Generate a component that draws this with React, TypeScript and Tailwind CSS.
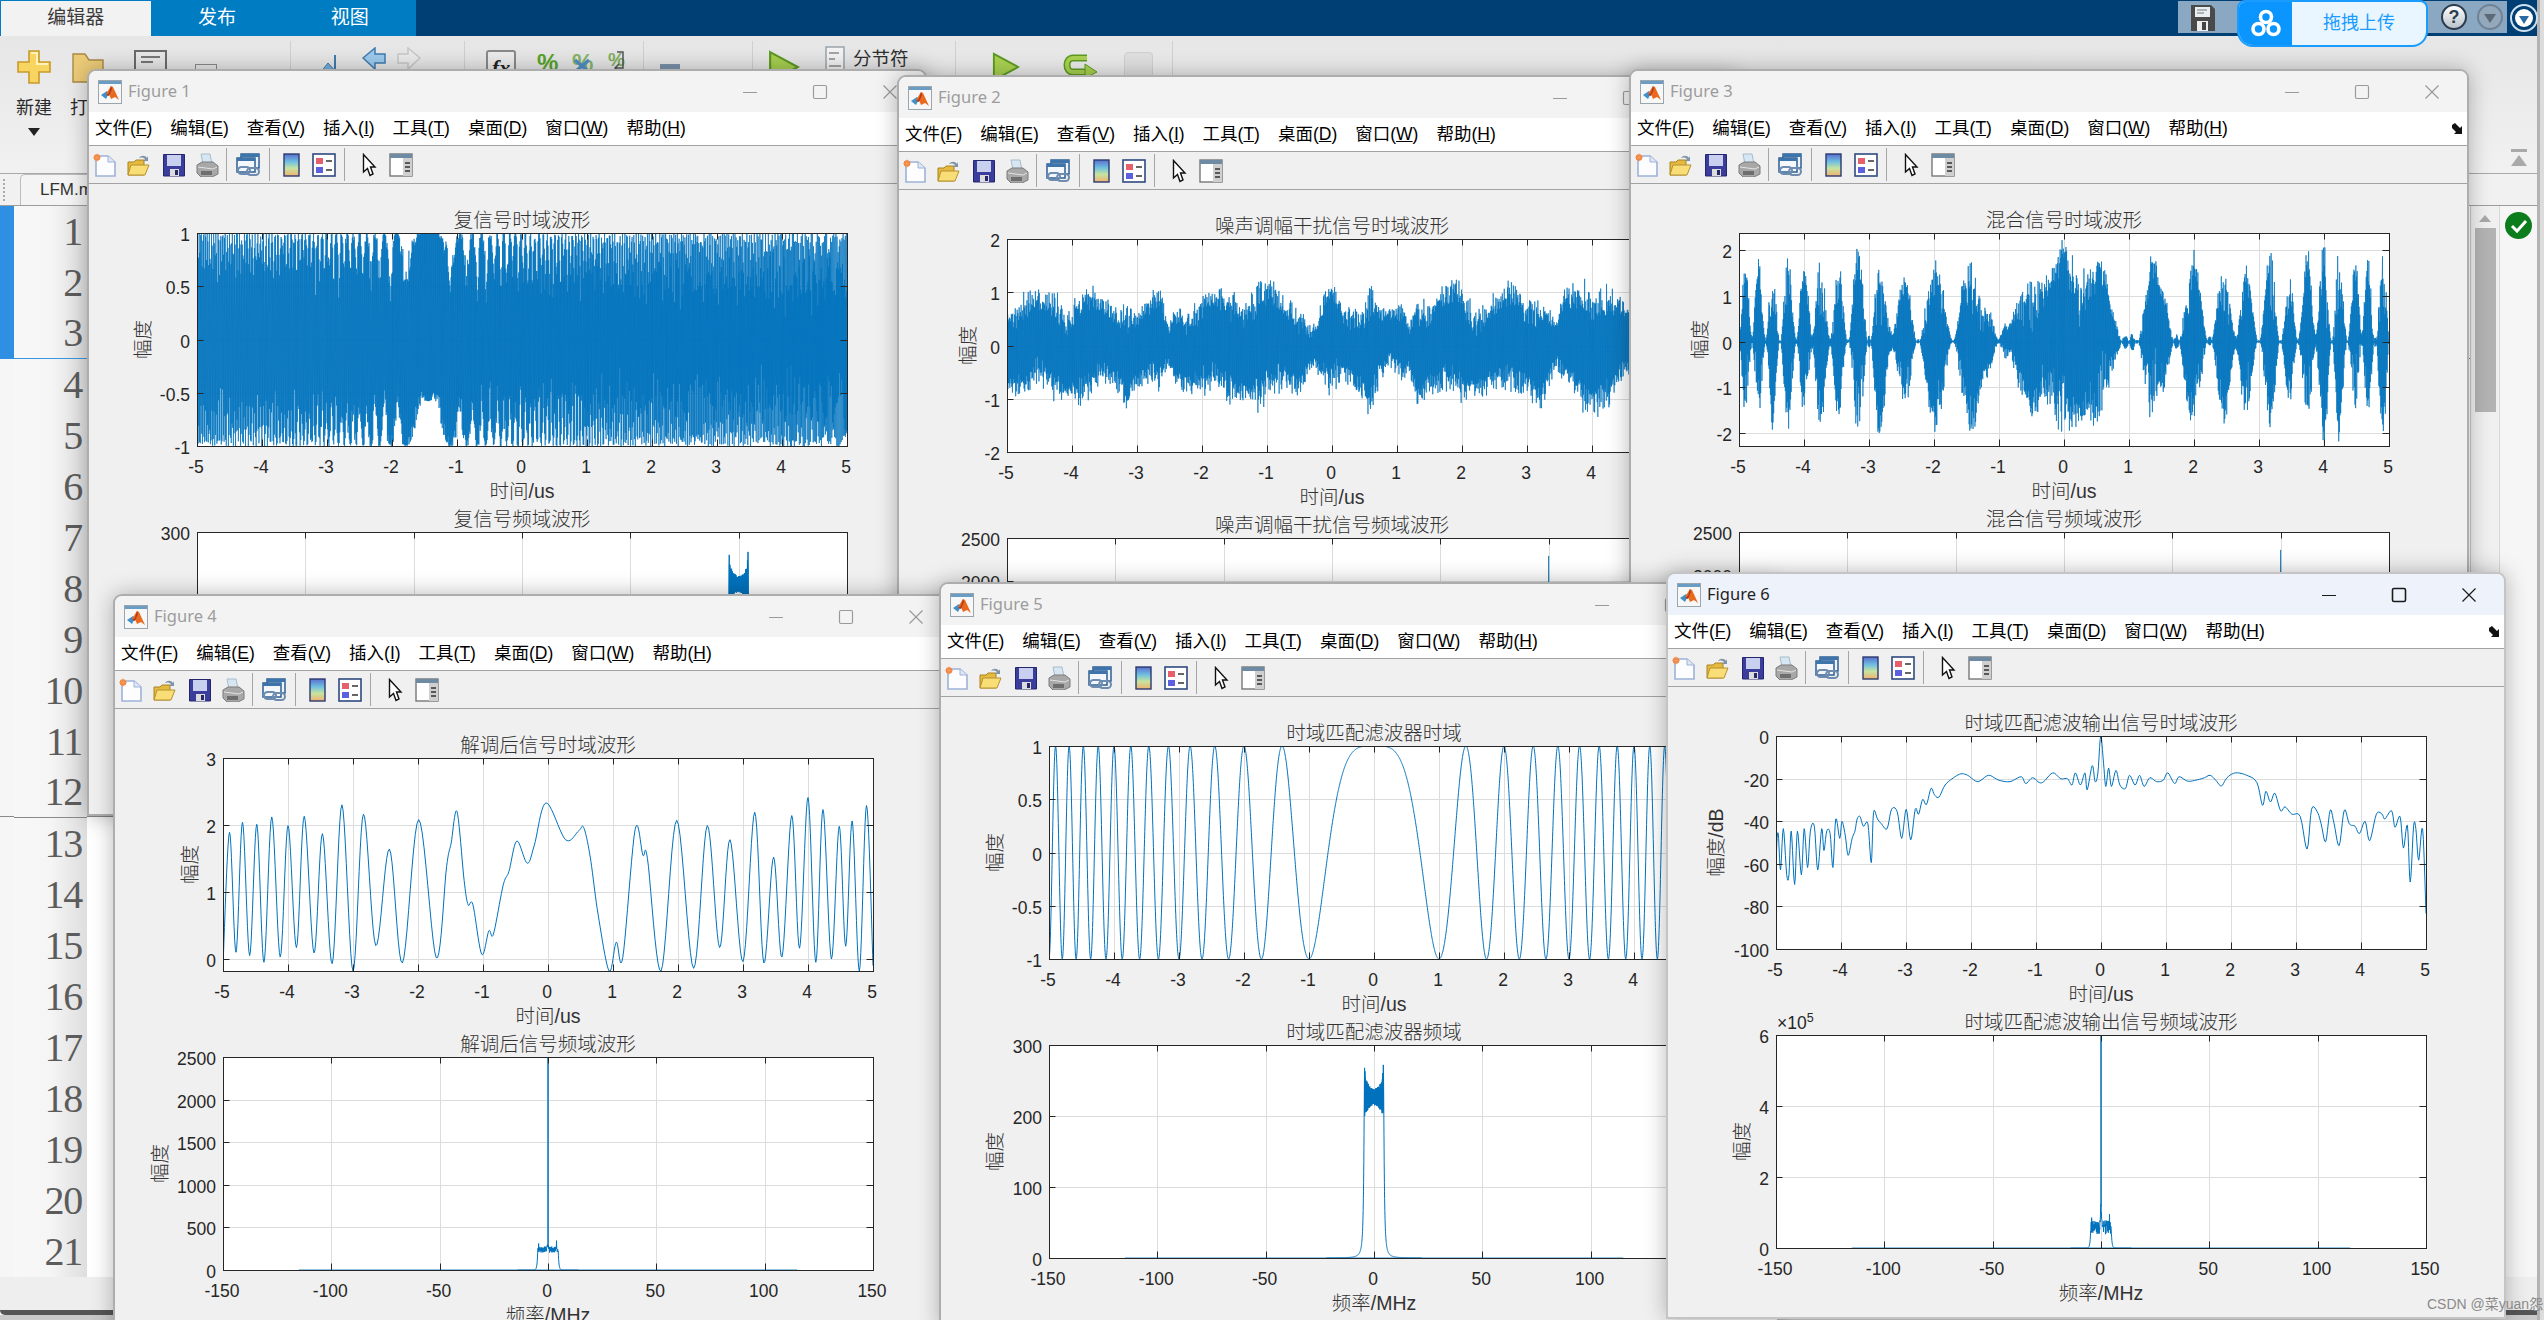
import React from "react";

type P = [number, number];
const BLUE = "#0072bd";

function rng(seed: number) {
  let a = seed;
  return () => {
    a |= 0; a = (a + 0x6d2b79f5) | 0;
    let t = Math.imul(a ^ (a >>> 15), 1 | a);
    t = (t + Math.imul(t ^ (t >>> 7), 61 | t)) ^ t;
    return ((t ^ (t >>> 14)) >>> 0) / 4294967296;
  };
}

function spline(pts: P[], n = 10): P[] {
  const out: P[] = [];
  for (let i = 0; i < pts.length - 1; i++) {
    const p0 = pts[Math.max(i - 1, 0)], p1 = pts[i], p2 = pts[i + 1], p3 = pts[Math.min(i + 2, pts.length - 1)];
    for (let j = 0; j < n; j++) {
      const s = j / n, s2 = s * s, s3 = s2 * s;
      const f = (a: number, b: number, c: number, d: number) =>
        0.5 * (2 * b + (c - a) * s + (2 * a - 5 * b + 4 * c - d) * s2 + (3 * b - a - 3 * c + d) * s3);
      out.push([f(p0[0], p1[0], p2[0], p3[0]), f(p0[1], p1[1], p2[1], p3[1])]);
    }
  }
  out.push(pts[pts.length - 1]);
  return out;
}

function lookup(pts: P[], x: number) {
  let lo = 0, hi = pts.length - 1;
  while (hi - lo > 1) {
    const m = (lo + hi) >> 1;
    if (pts[m][0] <= x) lo = m; else hi = m;
  }
  const d = pts[hi][0] - pts[lo][0] || 1;
  return pts[lo][1] + ((pts[hi][1] - pts[lo][1]) * (x - pts[lo][0])) / d;
}

const demodKnots: P[] = [[-5,-.1],[-4.9,1.89],[-4.8,.1],[-4.7,2.04],[-4.59,.05],[-4.48,2.01],[-4.37,-.05],[-4.25,2.12],[-4.12,.03],[-4,1.99],[-3.87,.17],[-3.75,2.13],[-3.6,.09],[-3.47,1.87],[-3.32,-.07],[-3.17,2.3],[-3,-.18],[-2.84,2.16],[-2.65,.2],[-2.44,1.64],[-2.24,-.06],[-1.99,2.08],[-1.72,.02],[-1.56,1.38],[-1.49,1.73],[-1.4,2.2],[-1.29,1.17],[-1.23,.81],[-1.155,.81],[-1.02,.07],[-.91,.42],[-.84,.37],[-.69,1.1],[-.6,1.31],[-.48,1.76],[-.32,1.43],[-.21,1.7],[-.03,2.33],[.27,1.78],[.47,1.91],[.55,1.96],[.65,1.52],[.77,.67],[.94,-.18],[1.05,.25],[1.15,.02],[1.34,1.93],[1.46,1.55],[1.53,1.5],[1.74,-.18],[1.98,2.07],[2.24,-.14],[2.45,1.99],[2.64,.17],[2.8,1.78],[3,-.04],[3.18,2.19],[3.32,-.06],[3.47,1.52],[3.6,.03],[3.75,2.14],[3.87,.16],[4,2.41],[4.12,-.05],[4.23,2.23],[4.36,0],[4.48,1.98],[4.58,.19],[4.68,2.06],[4.79,-.18],[4.9,2.29],[5,-.1]];
const demod = spline(demodKnots, 10);

const matched: number[][] = [[205,745],[206,600],[209,565],[213,640],[218,555],[224,650],[228,650],[232,560],[238,670],[243,560],[250,650],[255,555],[261,635],[266,560],[273,550],[279,640],[286,555],[290,600],[295,560],[301,565],[306,635],[311,535],[318,575],[322,540],[328,570],[333,610],[340,575],[345,560],[349,535],[354,530],[360,550],[368,545],[374,625],[378,522],[385,535],[392,545],[402,555],[410,515],[420,520],[428,575],[436,515],[444,578],[452,515],[458,525],[465,495],[472,505],[480,472],[486,485],[494,490],[505,465],[520,450],[533,442],[545,445],[563,458],[582,445],[600,455],[620,458],[640,448],[648,462],[660,450],[672,460],[680,458],[696,440],[710,452],[722,452],[730,465],[736,440],[745,465],[753,440],[757,475],[766,425],[771,458],[776,440],[781,364],[786,420],[790,468],[795,430],[800,468],[808,435],[815,465],[825,472],[832,445],[842,465],[850,445],[858,468],[868,450],[880,458],[892,455],[900,440],[912,462],[920,448],[935,457],[950,455],[965,450],[975,445],[985,455],[995,467],[1005,450],[1020,440],[1040,445],[1058,460],[1068,507],[1074,478],[1082,500],[1090,482],[1100,518],[1108,510],[1120,525],[1135,530],[1147,597],[1155,515],[1165,520],[1172,545],[1180,582],[1188,517],[1195,545],[1204,590],[1213,517],[1222,545],[1232,550],[1240,565],[1250,540],[1258,580],[1270,525],[1280,525],[1285,535],[1297,518],[1303,552],[1312,530],[1318,595],[1325,548],[1330,665],[1336,550],[1340,555],[1345,620],[1352,555],[1358,730]];
const matchedPts = spline(matched.map(([x, y]) => [((x - 205) / 1153) * 10 - 5, (-(y - 364) / 439) * 100] as P), 5);

const noiseEnvKnots: number[][] = [[246,330],[270,295],[300,300],[350,295],[380,310],[405,262],[435,295],[470,340],[495,265],[520,330],[565,285],[585,400],[600,325],[625,315],[650,330],[660,295],[710,280],[740,290],[770,258],[800,265],[830,310],[860,315],[880,395],[890,395],[920,258],[950,340],[980,330],[1005,240],[1030,350],[1060,350],[1075,330],[1085,390],[1105,280],[1130,310],[1183,258],[1220,310],[1255,310],[1295,265],[1330,310],[1360,260],[1395,395],[1410,300],[1440,265],[1465,245],[1500,255],[1545,340],[1600,300]];
const noiseEnv = noiseEnvKnots.map(([x, y]) => [(x - 246) / 136 - 5, (467 - y) / 160] as P);

function sampled(fn: (t: number, i: number) => number): P[] {
  const out: P[] = [];
  for (let i = 0; i <= 3000; i++) {
    const t = -5 + i / 300;
    out.push([t, fn(t, i)]);
  }
  return out;
}

const r1 = rng(23), r2 = rng(11), r3 = rng(31), r4 = rng(47), r5 = rng(59);
const sigTime = sampled((t) => {
  const near = Math.exp(-(((t + 1.44) / 0.16) ** 2));
  const jitter = (r1() - 0.5) * 0.42 * (1 - near);
  return Math.cos(2 * Math.PI * 104.32 * t + 3 * Math.PI * t * t + 0.6 + jitter);
});
const jamTime = sampled((t) => lookup(noiseEnv, t) * (0.62 + 0.38 * r2()) * Math.cos(2 * Math.PI * 100.37 * t + (r3() - 0.5) * 0.7));
const mixTime = sampled((t) => Math.abs(lookup(demod, t)) * (0.72 + 0.28 * r4()) * Math.cos(2 * Math.PI * 100.43 * t + 0.4 + (r5() - 0.5) * 1.1));
const filterTime = sampled((t) => Math.cos(Math.PI * t * t));

function chirpBand(center: number, seed: number): P[] {
  const r = rng(seed);
  const out: P[] = [];
  let i = 0;
  for (let f = -22; f <= 22; f += 0.05, i++) {
    const d = Math.abs(f);
    let v: number;
    if (d < 4.3) {
      const u = d < 3.4 ? 238 + 12 * (d / 3.4) ** 2 : 250 + 22 * Math.min(1, (d - 3.4) / 0.8) ** 3;
      const l = 215 - 15 * Math.min(1, d / 4.2) ** 2;
      v = i % 2 ? l + (u - l) * (0.75 + 0.25 * r()) : l + (u - l) * 0.2 * r();
    } else {
      v = 272 / (1 + ((d - 4.3) / 0.4) ** 2);
    }
    out.push([center + f, v]);
  }
  return out;
}

function noiseBand(level: number, spread: number, top: number, seed: number, bump: number, edge: number): P[] {
  const r = rng(seed);
  const out: P[] = [];
  const step = 0.11;
  for (let f = -14; f <= 14; f += step) {
    const d = Math.abs(f);
    let v: number;
    if (d < 4.7) {
      v = level + spread * (r() * 2 - 1);
      if (d < 0.6) v += bump * (1 - d / 0.6);
    } else {
      v = level * Math.exp(-(d - 4.7) / 0.32);
    }
    if (Math.abs(f - 3.9) < 0.06) v = edge;
    if (Math.abs(f + 4.3) < 0.06) v = edge * 0.9;
    out.push([f, v]);
    if (f < 0 && f + step >= 0) {
      out.push([0, top]);
    }
  }
  return out;
}

type Trace = { d: P[]; w?: number; o?: number };
type Ax = {
  title: string;
  x: [number, number];
  xt: number[];
  y: [number, number];
  yt: number[];
  xl: string;
  yl: string;
  ylo: number;
  traces: Trace[];
  exp?: boolean;
};

const TIME = [-5, -4, -3, -2, -1, 0, 1, 2, 3, 4, 5];
const FREQ = [-150, -100, -50, 0, 50, 100, 150];
const base: Trace = { d: [[-115, 0], [115, 0]], w: 1.6, o: 0.55 };

const FONT = "font-['Liberation_Sans','Noto_Sans_CJK_SC',sans-serif]";

function Axes({ a, top, id }: { a: Ax; top: number; id: string }) {
  const L = 108, W = 650, H = 213;
  const mx = (v: number) => L + ((v - a.x[0]) / (a.x[1] - a.x[0])) * W;
  const my = (v: number) => top + H - ((v - a.y[0]) / (a.y[1] - a.y[0])) * H;
  const cx = L + W / 2;
  const gx = a.xt.filter((v) => v !== a.x[0] && v !== a.x[1]);
  const gy = a.yt.filter((v) => v !== a.y[0] && v !== a.y[1]);
  return (
    <g>
      <defs>
        <clipPath id={id}>
          <rect x={L} y={top} width={W} height={H} />
        </clipPath>
      </defs>
      <text x={cx} y={top - 6} textAnchor="middle" className={`${FONT} fill-[#333333] text-[19.5px] font-light`}>
        {a.title}
      </text>
      <rect x={L} y={top} width={W} height={H} fill="#fff" />
      {gx.map((v) => (
        <line key={v} x1={Math.round(mx(v)) + 0.5} x2={Math.round(mx(v)) + 0.5} y1={top} y2={top + H} stroke="#dcdcdc" />
      ))}
      {gy.map((v) => (
        <line key={v} x1={L} x2={L + W} y1={Math.round(my(v)) + 0.5} y2={Math.round(my(v)) + 0.5} stroke="#dcdcdc" />
      ))}
      <g clipPath={`url(#${id})`}>
        {a.traces.map((t, i) => (
          <path
            key={i}
            d={"M" + t.d.map(([x, y]) => `${mx(x).toFixed(2)} ${my(y).toFixed(2)}`).join("L")}
            fill="none"
            stroke={BLUE}
            strokeWidth={t.w ?? 1}
            strokeOpacity={t.o ?? 1}
            strokeLinejoin="round"
          />
        ))}
      </g>
      <rect x={L + 0.5} y={top + 0.5} width={W} height={H} fill="none" stroke="#262626" />
      {gx.map((v) => {
        const x = Math.round(mx(v)) + 0.5;
        return (
          <g key={v} stroke="#262626">
            <line x1={x} x2={x} y1={top} y2={top + 6.5} />
            <line x1={x} x2={x} y1={top + H} y2={top + H - 6.5} />
          </g>
        );
      })}
      {gy.map((v) => {
        const y = Math.round(my(v)) + 0.5;
        return (
          <g key={v} stroke="#262626">
            <line x1={L} x2={L + 6.5} y1={y} y2={y} />
            <line x1={L + W} x2={L + W - 6.5} y1={y} y2={y} />
          </g>
        );
      })}
      {a.xt.map((v) => (
        <text key={v} x={mx(v) - 1} y={top + H + 27} textAnchor="middle" className={`${FONT} fill-[#262626] text-[17.5px]`}>
          {String(v)}
        </text>
      ))}
      {a.yt.map((v) => (
        <text key={v} x={L - 7} y={my(v) + 8} textAnchor="end" className={`${FONT} fill-[#262626] text-[17.5px]`}>
          {String(v)}
        </text>
      ))}
      <text x={cx} y={top + H + 52} textAnchor="middle" className={`${FONT} fill-[#333333] text-[19.5px] font-light`}>
        {a.xl}
      </text>
      <text
        x={L - a.ylo}
        y={top + H / 2}
        transform={`rotate(-90 ${L - a.ylo} ${top + H / 2})`}
        textAnchor="middle"
        dominantBaseline="central"
        className={`${FONT} fill-[#333333] text-[19.5px] font-light`}
      >
        {a.yl}
      </text>
      {a.exp && (
        <text x={L + 1} y={top - 6} className={`${FONT} fill-[#262626] text-[17.5px]`}>
          ×10
          <tspan dy={-7} className="text-[12.5px]">5</tspan>
        </text>
      )}
    </g>
  );
}

function Logo() {
  return (
    <svg width="24" height="24" viewBox="0 0 24 24" className="shrink-0">
      <rect x="0.5" y="0.5" width="23" height="23" fill="#f7f7f7" stroke="#9aa5ae" />
      <rect x="1" y="1" width="22" height="3" fill="#6a9cc4" />
      <path d="M3 15 L9 11 L11 13 L8 19 Z" fill="#3f8fc9" />
      <path d="M8 14 L13 6 L15 7 L21 20 L17 17 L13 19 L11 14 Z" fill="#e96a1e" />
      <path d="M13 6 L11 13 L8 15 L11 16 L14 9 Z" fill="#b5381a" />
    </svg>
  );
}

function NewDoc() {
  return (
    <svg width="24" height="24" viewBox="0 0 24 24">
      <path d="M3 3H15L22 9V23H3Z" fill="#fdfdff" stroke="#9db2d8" strokeWidth="1.6" />
      <path d="M15 3V9H22" fill="#dfe7f5" stroke="#9db2d8" />
      <circle cx="4" cy="4.5" r="3.2" fill="#ee7d3b" />
      <path d="M0 4.5H8M4 .5V8.5M1.5 2L6.5 7M6.5 2L1.5 7" stroke="#f5a05e" strokeWidth="0.8" />
    </svg>
  );
}
function OpenF() {
  return (
    <svg width="24" height="24" viewBox="0 0 24 24">
      <path d="M2 9H8L10 7H18V22H2Z" fill="#e6b93f" stroke="#a88422" />
      <path d="M2 22L5 12H23L19 22Z" fill="#f9dd76" stroke="#b6922e" />
      <path d="M13 5C15 2 19 2 21 5L22 3V8H17L19 6C18 4.500 15 4 13 5Z" fill="#7f93a8" />
    </svg>
  );
}
function SaveF() {
  return (
    <svg width="24" height="24" viewBox="0 0 24 24">
      <path d="M1.500 1.500H22.500V23H1.500Z" fill="#3a3d9c" stroke="#24276e" />
      <rect x="5" y="2" width="14" height="11" fill="#c9cfee" />
      <rect x="8" y="16" width="9" height="7" fill="#dcdcdc" />
      <rect x="13" y="17" width="3" height="5" fill="#26286a" />
    </svg>
  );
}
function PrintF() {
  return (
    <svg width="24" height="24" viewBox="0 0 24 24">
      <path d="M6 1L15 1L17 11H8Z" fill="#d6e6f2" stroke="#a8bccb" />
      <path d="M2 12L7 9H18L23 13V21L17 24H6L2 20Z" fill="#a8a8a8" stroke="#7c7c7c" />
      <path d="M3 14L18 16L22 14" stroke="#e3e3e3" fill="none" />
      <rect x="6" y="18" width="11" height="4" fill="#6e6e6e" />
    </svg>
  );
}
function LinkF() {
  return (
    <svg width="25" height="24" viewBox="0 0 25 24">
      <rect x="5" y="1" width="18" height="14" fill="#eef3fa" stroke="#2c5f94" strokeWidth="1.5" />
      <rect x="5" y="1" width="18" height="3" fill="#3c74ab" />
      <rect x="1" y="5" width="18" height="14" fill="#f4f7fb" stroke="#2c5f94" strokeWidth="1.5" />
      <rect x="1" y="5" width="18" height="3" fill="#3c74ab" />
      <rect x="2" y="14" width="12" height="7" rx="3.5" fill="none" stroke="#6d8cb0" strokeWidth="2" />
      <rect x="11" y="15" width="12" height="7" rx="3.5" fill="none" stroke="#6d8cb0" strokeWidth="2" />
    </svg>
  );
}
function ColorF() {
  return (
    <svg width="17" height="24" viewBox="0 0 17 24">
      <defs>
        <linearGradient id="cbar" x1="0" y1="0" x2="0" y2="1">
          <stop offset="0" stopColor="#5a6fd0" />
          <stop offset="0.35" stopColor="#6fbfe0" />
          <stop offset="0.65" stopColor="#c6e4a0" />
          <stop offset="1" stopColor="#f2b070" />
        </linearGradient>
      </defs>
      <rect x="1" y="1" width="15" height="22" fill="url(#cbar)" stroke="#2b3a6e" strokeWidth="1.4" />
    </svg>
  );
}
function LegendF() {
  return (
    <svg width="24" height="24" viewBox="0 0 24 24">
      <rect x="1" y="1" width="22" height="22" fill="#fff" stroke="#2f4a80" strokeWidth="1.6" />
      <rect x="4" y="5" width="7" height="6" fill="#e5606a" />
      <rect x="4" y="14" width="7" height="6" fill="#5b5fe0" />
      <path d="M14 8H20M14 17H20" stroke="#333" strokeWidth="1.6" />
    </svg>
  );
}
function PointerF() {
  return (
    <svg width="15" height="24" viewBox="0 0 15 24">
      <path d="M1.500 1.500L13 14H8.500L11 21L8 22.500L5.500 15.500L1.500 19Z" fill="#fff" stroke="#111" strokeWidth="1.4" />
    </svg>
  );
}
function PanelF() {
  return (
    <svg width="24" height="24" viewBox="0 0 24 24">
      <rect x="1" y="1" width="22" height="22" fill="#fff" stroke="#777" strokeWidth="1.4" />
      <rect x="1" y="1" width="22" height="4" fill="#6f8ba3" />
      <rect x="14" y="5" width="9" height="18" fill="#cfcfcf" />
      <path d="M16 10H21M16 14H21M16 18H21" stroke="#333" strokeWidth="1.6" />
    </svg>
  );
}

function Sep({ cls }: { cls: string }) {
  return <div className={`w-px h-[33px] bg-[#a5a5a5] ${cls}`} />;
}

function Toolbar() {
  return (
    <div className="h-[38px] flex items-center border-b border-[#a2a2a2] bg-[#f0f0f0] pl-[4px] shrink-0">
      <NewDoc />
      <div className="ml-[9px]"><OpenF /></div>
      <div className="ml-[12px]"><SaveF /></div>
      <div className="ml-[9px]"><PrintF /></div>
      <Sep cls="ml-[7px]" />
      <div className="ml-[9px]"><LinkF /></div>
      <Sep cls="ml-[8px]" />
      <div className="ml-[13px]"><ColorF /></div>
      <div className="ml-[12px]"><LegendF /></div>
      <Sep cls="ml-[8px]" />
      <div className="ml-[17px]"><PointerF /></div>
      <div className="ml-[12px]"><PanelF /></div>
    </div>
  );
}

const MENU: [string, string][] = [["文件", "F"], ["编辑", "E"], ["查看", "V"], ["插入", "I"], ["工具", "T"], ["桌面", "D"], ["窗口", "W"], ["帮助", "H"]];

function Win({ n, cls, active, arrow, axes }: { n: number; cls: string; active?: boolean; arrow?: boolean; axes: [Ax, Ax] }) {
  const stroke = active ? "#1a1a1a" : "#9a9a9a";
  return (
    <div
      className={`absolute w-[840px] h-[747px] rounded-t-[9px] overflow-hidden border-2 flex flex-col bg-[#f0f0f0] shadow-[0_0_22px_rgba(0,0,0,0.28)] ${active ? "border-[#c4c4c4]" : "border-[#adadad]"} ${cls}`}
    >
      <div className={`h-[41px] flex items-center pl-[9px] shrink-0 ${active ? "bg-[#eef2fa]" : "bg-[#f3f3f3]"}`}>
        <Logo />
        <span className={`ml-[6px] -mt-[1px] text-[16.5px] font-['Noto_Sans',sans-serif] ${active ? "text-[#1f1f1f]" : "text-[#9c9c9c]"}`}>Figure {n}</span>
        <div className="ml-auto flex">
          <div className="w-[70px] flex justify-center">
            <svg width="16" height="16"><path d="M1 8.500H15" stroke={stroke} strokeWidth="1.2" /></svg>
          </div>
          <div className="w-[70px] flex justify-center">
            <svg width="16" height="16"><rect x="1.500" y="1.500" width="13" height="13" rx="1.500" fill="none" stroke={stroke} strokeWidth={active ? 1.6 : 1.2} /></svg>
          </div>
          <div className="w-[70px] flex justify-center">
            <svg width="16" height="16"><path d="M1.500 1.500L14.500 14.500M14.500 1.500L1.500 14.500" stroke={stroke} strokeWidth="1.200" /></svg>
          </div>
        </div>
      </div>
      <div className="h-[34px] flex items-center bg-white border-b border-[#a2a2a2] pl-[6px] gap-[18px] shrink-0 relative">
        {MENU.map(([a, b]) => (
          <span key={b} className={`${FONT} text-[17.5px] text-black whitespace-nowrap`}>
            {a}(<u>{b}</u>)
          </span>
        ))}
        {arrow && (
          <svg width="14" height="14" viewBox="0 0 14 14" className="ml-auto mr-[3px]">
            <path d="M2 3L5 1L10 6L12 4V12H4L6 10L2 6Z" fill="#111" />
          </svg>
        )}
      </div>
      <Toolbar />
      <svg width="840" height="632" className="block shrink-0">
        <Axes a={axes[0]} top={49} id={`a${n}a`} />
        <Axes a={axes[1]} top={348} id={`a${n}b`} />
      </svg>
    </div>
  );
}

const Y01 = [-1, -0.5, 0, 0.5, 1];
const fig1: [Ax, Ax] = [
  { title: "复信号时域波形", x: [-5, 5], xt: TIME, y: [-1, 1], yt: Y01, xl: "时间/us", yl: "幅度", ylo: 54, traces: [{ d: sigTime, w: 0.7 }] },
  { title: "复信号频域波形", x: [-150, 150], xt: FREQ, y: [0, 300], yt: [0, 100, 200, 300], xl: "频率/MHz", yl: "幅度", ylo: 54, traces: [{ d: chirpBand(100, 3) }] },
];
const spike: Trace = { d: [[100, 0], [100, 2290]] };
const fig2: [Ax, Ax] = [
  { title: "噪声调幅干扰信号时域波形", x: [-5, 5], xt: TIME, y: [-2, 2], yt: [-2, -1, 0, 1, 2], xl: "时间/us", yl: "幅度", ylo: 39, traces: [{ d: jamTime, w: 0.7 }] },
  { title: "噪声调幅干扰信号频域波形", x: [-150, 150], xt: FREQ, y: [0, 2500], yt: [0, 500, 1000, 1500, 2000, 2500], xl: "频率/MHz", yl: "幅度", ylo: 60, traces: [spike] },
];
const fig3: [Ax, Ax] = [
  { title: "混合信号时域波形", x: [-5, 5], xt: TIME, y: [-2.28, 2.37], yt: [-2, -1, 0, 1, 2], xl: "时间/us", yl: "幅度", ylo: 39, traces: [{ d: mixTime, w: 0.7 }] },
  { title: "混合信号频域波形", x: [-150, 150], xt: FREQ, y: [0, 2500], yt: [0, 500, 1000, 1500, 2000, 2500], xl: "频率/MHz", yl: "幅度", ylo: 60, traces: [spike] },
];
const fig4: [Ax, Ax] = [
  { title: "解调后信号时域波形", x: [-5, 5], xt: TIME, y: [-0.18, 3], yt: [0, 1, 2, 3], xl: "时间/us", yl: "幅度", ylo: 33, traces: [{ d: demod }] },
  { title: "解调后信号频域波形", x: [-150, 150], xt: FREQ, y: [0, 2500], yt: [0, 500, 1000, 1500, 2000, 2500], xl: "频率/MHz", yl: "幅度", ylo: 63, traces: [base, { d: noiseBand(240, 35, 2500, 5, 60, 345) }] },
];
const fig5: [Ax, Ax] = [
  { title: "时域匹配滤波器时域", x: [-5, 5], xt: TIME, y: [-1, 1], yt: Y01, xl: "时间/us", yl: "幅度", ylo: 54, traces: [{ d: filterTime }] },
  { title: "时域匹配滤波器频域", x: [-150, 150], xt: FREQ, y: [0, 300], yt: [0, 100, 200, 300], xl: "频率/MHz", yl: "幅度", ylo: 54, traces: [base, { d: chirpBand(0, 7) }] },
];
const fig6: [Ax, Ax] = [
  { title: "时域匹配滤波输出信号时域波形", x: [-5, 5], xt: TIME, y: [-100, 0], yt: [-100, -80, -60, -40, -20, 0], xl: "时间/us", yl: "幅度/dB", ylo: 60, traces: [{ d: matchedPts }] },
  { title: "时域匹配滤波输出信号频域波形", x: [-150, 150], xt: FREQ, y: [0, 6], yt: [0, 2, 4, 6], xl: "频率/MHz", yl: "幅度", ylo: 34, exp: true, traces: [base, { d: noiseBand(0.58, 0.2, 6, 9, 0.6, 0.95) }] },
];

function RibbonSep({ cls }: { cls: string }) {
  return <div className={`w-px h-[125px] mt-[5px] bg-[#d0d0d0] shrink-0 ${cls}`} />;
}

function GreenPlay({ w, h }: { w: number; h: number }) {
  return (
    <svg width={w} height={h} viewBox="0 0 30 30">
      <path d="M2 1L28 15L2 29Z" fill="#a8d050" stroke="#5c9a22" strokeWidth="2" />
    </svg>
  );
}

function Ribbon() {
  return (
    <div className="h-[138px] flex items-start bg-linear-to-b from-[#e6e6e6] to-[#f1f1f1] border-b border-[#a9a9a9] shrink-0 overflow-hidden">
      <div className="ml-[14px] w-[40px] shrink-0 mt-[14px] flex flex-col items-center">
        <svg width="34" height="34" viewBox="0 0 34 34">
          <path d="M12 1H22V12H33V22H22V33H12V22H1V12H12Z" fill="#f8d560" stroke="#c99a2c" strokeWidth="1.6" />
          <path d="M14 3H20V14H31" fill="none" stroke="#fff3b8" strokeWidth="2" />
        </svg>
        <span className={`${FONT} text-[18px] text-[#2a2a2a] mt-[12px] leading-[24px] whitespace-nowrap`}>新建</span>
        <div className="w-0 h-0 mt-[8px] border-l-[6px] border-r-[6px] border-t-[8px] border-l-transparent border-r-transparent border-t-[#222]" />
      </div>
      <div className="ml-[14px] w-[40px] shrink-0 mt-[14px] flex flex-col items-center">
        <svg width="34" height="34" viewBox="0 0 34 34">
          <path d="M2 4H14L18 10H32V32H2Z" fill="#eccb78" stroke="#a88a45" strokeWidth="1.4" />
        </svg>
        <span className={`${FONT} text-[18px] text-[#2a2a2a] mt-[12px] leading-[24px] whitespace-nowrap`}>打开</span>
      </div>
      <svg width="33" height="34" viewBox="0 0 33 34" className="ml-[26px] shrink-0 mt-[14px]">
        <rect x="1" y="1" width="31" height="32" fill="#e9e9e9" stroke="#6c6c6c" strokeWidth="2" />
        <path d="M7 7H26M7 12H19" stroke="#777" strokeWidth="2" />
      </svg>
      <div className="ml-[28px] w-[22px] h-[10px] mt-[28px] border border-[#8a8a8a] bg-[#e9e9e9] shrink-0" />
      <RibbonSep cls="ml-[73px]" />
      <svg width="30" height="26" viewBox="0 0 30 26" className="ml-[19px] mt-[19px] shrink-0">
        <path d="M0 26V18H10L18 8L29 20V26Z" fill="#7ab0dc" stroke="#3f7cb0" />
        <path d="M25 0V26" stroke="#3f7cb0" strokeWidth="2" />
      </svg>
      <svg width="24" height="24" viewBox="0 0 24 24" className="ml-[22px] mt-[11px] shrink-0">
        <path d="M1 11L13 1V7H23V16H13V22Z" fill="#9fcbee" stroke="#3f7cb0" strokeWidth="1.5" />
      </svg>
      <svg width="24" height="24" viewBox="0 0 24 24" className="ml-[11px] mt-[11px] shrink-0">
        <path d="M23 11L11 1V7H1V16H11V22Z" fill="#ececec" stroke="#c8c8c8" strokeWidth="1.5" />
      </svg>
      <RibbonSep cls="ml-[43px]" />
      <div className="ml-[21px] w-[30px] h-[34px] mt-[14px] border-2 border-[#8a8a8a] rounded-[3px] bg-[#ededed] flex items-center justify-center shrink-0">
        <span className="font-['Liberation_Serif',serif] italic font-bold text-[22px] text-[#222]">fx</span>
      </div>
      <span className="ml-[21px] w-[22px] mt-[12px] font-['Liberation_Sans',sans-serif] font-bold text-[24px] leading-[30px] text-[#58a42a] shrink-0">%</span>
      <div className="ml-[13px] w-[24px] mt-[12px] shrink-0 flex">
        <span className="font-['Liberation_Sans',sans-serif] font-bold text-[24px] leading-[30px] text-[#86b76a] -mr-[24px]">%</span>
        <svg width="24" height="26" viewBox="0 0 24 26"><path d="M6 12L20 24M20 12L6 24" stroke="#4f8fc8" strokeWidth="3.500" /></svg>
      </div>
      <div className="ml-[12px] w-[24px] mt-[12px] shrink-0 flex">
        <span className="font-['Liberation_Sans',sans-serif] font-bold text-[19px] leading-[24px] text-[#7fb05f] -mr-[24px]">%</span>
        <svg width="24" height="26" viewBox="0 0 24 26"><path d="M16 4H22V20H15M18 16L14 20L18 24" fill="none" stroke="#555" strokeWidth="1.500" /></svg>
      </div>
      <RibbonSep cls="ml-[11px]" />
      <div className="ml-[16px] w-[20px] h-[10px] mt-[28px] bg-[#7c93ad] shrink-0" />
      <RibbonSep cls="ml-[72px]" />
      <div className="ml-[15px] mt-[14px] shrink-0"><GreenPlay w={32} h={34} /></div>
      <svg width="20" height="32" viewBox="0 0 20 32" className="ml-[25px] mt-[10px] shrink-0">
        <rect x="1" y="1" width="18" height="30" fill="#f4f4f4" stroke="#9aa5ae" strokeWidth="1.5" />
        <path d="M4 7H14M4 13H10M4 20H16M4 25H10" stroke="#8a8a8a" strokeWidth="1.500" />
      </svg>
      <span className={`${FONT} ml-[8px] w-[56px] mt-[10px] text-[18.5px] leading-[26px] text-[#2f2f2f] whitespace-nowrap shrink-0`}>分节符</span>
      <RibbonSep cls="ml-[46px]" />
      <div className="ml-[36px] mt-[14px] shrink-0"><GreenPlay w={28} h={34} /></div>
      <svg width="35" height="26" viewBox="0 0 35 26" className="ml-[43px] mt-[16px] shrink-0">
        <path d="M24 6H10C2 6 2 20 10 20H24" fill="none" stroke="#5c9a22" strokeWidth="7" />
        <path d="M24 6H10C2 6 2 20 10 20H24" fill="none" stroke="#a8d050" strokeWidth="4" />
        <path d="M22 12L34 20L22 26Z" fill="#a8d050" stroke="#5c9a22" />
      </svg>
      <div className="ml-[26px] w-[29px] h-[29px] mt-[16px] rounded-[4px] border border-[#cfcfcf] bg-[#dedede] shrink-0" />
      <RibbonSep cls="ml-[19px]" />
      <svg width="18" height="18" viewBox="0 0 18 18" className="ml-auto mr-[9px] mt-[113px] shrink-0">
        <rect x="1" y="0" width="16" height="3" fill="#a9a9a9" />
        <path d="M9 6L17 17H1Z" fill="#a9a9a9" />
      </svg>
    </div>
  );
}

function Header() {
  return (
    <div className="h-[36px] flex bg-[#003f73] shrink-0 overflow-visible">
      <div className="w-[416px] flex bg-[#007cc3] shrink-0">
        <div className={`${FONT} w-[150px] mt-[1px] ml-[1px] bg-[#f2f2f2] text-[#3b3b3b] text-[19px] flex items-center justify-center`}>编辑器</div>
        <div className={`${FONT} w-[133px] text-white text-[19px] flex items-center justify-center`}>发布</div>
        <div className={`${FONT} w-[133px] text-white text-[19px] flex items-center justify-center`}>视图</div>
      </div>
      <div className="ml-auto w-[329px] h-[32px] mt-[1px] mr-[30px] bg-[#8ba8c2] flex items-start shrink-0 relative">
        <svg width="26" height="28" viewBox="0 0 26 28" className="ml-[12px] mt-[3px]">
          <path d="M1 1H21L25 5V27H1Z" fill="#4a4a4a" />
          <rect x="5" y="3" width="15" height="10" fill="#e9eef3" />
          <path d="M7 6H17M7 9H14" stroke="#777" />
          <rect x="7" y="17" width="11" height="10" fill="#eee" />
          <rect x="12" y="18" width="4" height="8" fill="#444" />
        </svg>
        <div className="ml-auto mr-[4px] mt-[3px] w-[26px] h-[26px] rounded-full border-2 border-[#6f8296] bg-[#93a8ba] flex items-center justify-center shrink-0">
          <div className="w-0 h-0 mt-[3px] border-l-[6px] border-r-[6px] border-t-[9px] border-l-transparent border-r-transparent border-t-[#5c6a78]" />
        </div>
        <div className="absolute right-[40px] top-[3px] w-[26px] h-[26px] rounded-full border-2 border-[#2c3c4c] bg-linear-to-b from-[#ffffff] to-[#b9c2cb] flex items-center justify-center">
          <span className="font-['Liberation_Sans',sans-serif] font-bold text-[18px] leading-none text-[#2c3c4c]">?</span>
        </div>
        <div className="absolute left-[59px] -top-[1px] w-[191px] h-[47px] flex rounded-b-[16px] rounded-tl-[8px] rounded-tr-[8px] border-2 border-[#1a9cff] bg-[#eaf6ff] overflow-hidden">
          <div className="w-[53px] bg-[#0a95ff] flex items-center justify-center shrink-0">
            <svg width="32" height="32" viewBox="0 0 32 32">
              <g fill="none" stroke="#fff" strokeWidth="3.6">
                <circle cx="16" cy="9" r="5.500" />
                <circle cx="8.500" cy="21" r="5.500" />
                <circle cx="23.500" cy="21" r="5.500" />
              </g>
            </svg>
          </div>
          <div className={`${FONT} flex-1 flex items-center justify-center text-[18px] text-[#1a9cff]`}>拖拽上传</div>
        </div>
      </div>
      <div className="absolute left-[2510px] top-[4px] w-[28px] h-[28px] rounded-full border-2 border-[#cfe0ee] bg-[#003f73] flex items-center justify-center">
        <div className="w-[18px] h-[18px] rounded-full bg-white flex items-center justify-center">
          <div className="w-0 h-0 mt-[3px] border-l-[5px] border-r-[5px] border-t-[8px] border-l-transparent border-r-transparent border-t-[#2a6ba5]" />
        </div>
      </div>
    </div>
  );
}

const ROWS = Array.from({ length: 21 }, (_, i) => i + 1);

function Editor() {
  return (
    <div className="flex-1 flex min-h-0">
      <div className="w-[14px] shrink-0 flex flex-col">
        <div className="h-[153px] bg-[#2f8fe3] border-b border-[#2f8fe3]" />
        <div className="h-[458px] border-b border-[#8a8a8a] bg-[#f6f6f6]" />
        <div className="flex-1 bg-[#f6f6f6]" />
      </div>
      <div className="w-[73px] shrink-0 bg-linear-to-r from-[#f8f8f8] via-[#f5f5f5] to-[#dedede]">
        {ROWS.map((r) => (
          <div
            key={r}
            className={`h-[51px] flex items-center justify-end pr-[5px] font-['Liberation_Serif',serif] text-[40px] tracking-[-0.03em] text-[#5c5c5c] ${r === 3 ? "border-b border-[#3a96dd]" : ""} ${r === 12 ? "border-b border-[#8a8a8a]" : ""}`}
          >
            {r}
          </div>
        ))}
      </div>
      <div className="flex-1 flex flex-col bg-white">
        <div className="h-[153px] border-b border-[#3a96dd]" />
        <div className="h-[458px] border-b border-[#8a8a8a]" />
      </div>
      <div className="w-[29px] shrink-0 bg-[#f0f0f0] border-l border-[#c8c8c8] flex flex-col items-center">
        <div className="w-0 h-0 mt-[9px] border-l-[6px] border-r-[6px] border-b-[7px] border-l-transparent border-r-transparent border-b-[#a8a8a8]" />
        <div className="w-[21px] h-[184px] mt-[6px] bg-[#b3b3b3]" />
      </div>
      <div className="w-[38px] shrink-0 bg-[#f6f6f6] border-l border-[#d8d8d8] flex justify-center pt-[6px]">
        <div className="w-[27px] h-[27px] rounded-full bg-[#0b7d1c] flex items-center justify-center">
          <svg width="18" height="16" viewBox="0 0 18 16">
            <path d="M2 8L7 13L16 3" fill="none" stroke="#fff" strokeWidth="3" />
          </svg>
        </div>
      </div>
    </div>
  );
}

export default function App() {
  return (
    <div className="relative w-[2544px] h-[1320px] overflow-hidden bg-[#dcdcdc]">
      <div className="w-[2540px] h-[1320px] flex flex-col border-r-[3px] border-[#b3b3b3] bg-[#efefef]">
        <Header />
        <Ribbon />
        <div className="h-[32px] flex items-end bg-[#f1f1f1] border-b border-[#9d9d9d] shrink-0">
          <div className="ml-[3px] mb-[4px] w-[3px] h-[22px] border-l-2 border-dotted border-[#aaa]" />
          <div className="ml-[14px] w-[110px] h-[31px] bg-[#f4f4f4] border-l border-t border-[#bdbdbd] rounded-tl-[5px] pl-[19px] flex items-center">
            <span className="font-['Liberation_Sans',sans-serif] text-[17px] text-[#333]">LFM.m</span>
          </div>
        </div>
        <Editor />
        <div className="h-[33px] bg-[#eeeeee] shrink-0" />
        <div className="h-[5px] bg-[#555] rounded-bl-[10px] shrink-0" />
        <div className="h-[5px] bg-[#c9c9c9] shrink-0" />
      </div>

      <Win n={1} cls="left-[87px] top-[69px]" axes={fig1} />
      <Win n={2} cls="left-[897px] top-[75px]" axes={fig2} />
      <Win n={3} cls="left-[1629px] top-[69px]" arrow axes={fig3} />
      <Win n={4} cls="left-[113px] top-[594px]" axes={fig4} />
      <Win n={5} cls="left-[939px] top-[582px]" axes={fig5} />
      <Win n={6} cls="left-[1666px] top-[572px]" active arrow axes={fig6} />

      <div className="absolute left-[2427px] bottom-[5px] text-[14px] font-['Liberation_Sans','Noto_Sans_CJK_SC',sans-serif] text-[#8a8a8a]">CSDN @菜yuan怨</div>
    </div>
  );
}
